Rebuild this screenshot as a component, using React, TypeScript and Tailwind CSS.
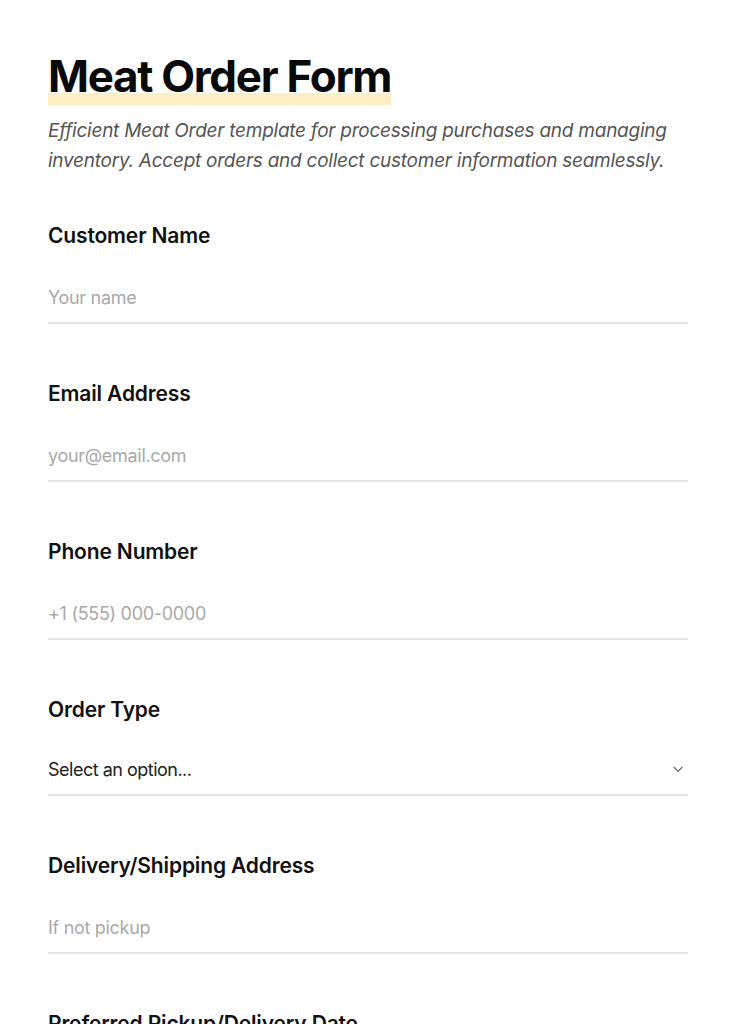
import React from 'react';

const fields = [
  { label: 'Customer Name', placeholder: 'Your name' },
  { label: 'Email Address', placeholder: 'your@email.com' },
  { label: 'Phone Number', placeholder: '+1 (555) 000-0000' },
];

const Label = ({ children }: { children: React.ReactNode }) => (
  <label className="block text-[21px] leading-[28px] font-semibold text-[#111] tracking-[-0.15px]">{children}</label>
);

const TextField = ({ label, placeholder }: { label: string; placeholder: string }) => (
  <div className="mb-[56px]">
    <Label>{label}</Label>
    <input
      type="text"
      placeholder={placeholder}
      className="mt-[26px] block w-full h-[48px] pb-[4px] border-b-2 border-[#e6e6e6] bg-transparent text-[18px] text-[#222] outline-none placeholder:text-[#a9a9a9] tracking-[-0.3px]"
    />
  </div>
);

const App = () => {
  return (
    <div className="min-h-screen bg-white px-12 pt-[50px] font-['Inter',sans-serif]">
      <h1 className="relative inline-block text-[44px] leading-[52px] font-bold text-[#0a0a0a] tracking-[-1.3px]">
        <span className="absolute left-0 right-0 top-[43px] h-[12px] bg-[#fcefc4]" />
        <span className="relative">Meat Order Form</span>
      </h1>
      <p className="mt-[14px] text-[19px] leading-[30px] italic text-[#555] tracking-[-0.25px]">
        Efficient Meat Order template for processing purchases and managing inventory. Accept orders and collect customer information seamlessly.
      </p>

      <div className="mt-[46px]">
        {fields.map((f) => (
          <TextField key={f.label} label={f.label} placeholder={f.placeholder} />
        ))}

        <div className="mb-[56px]">
          <Label>Order Type</Label>
          <div className="mt-[24px] flex h-[48px] pb-[4px] items-center justify-between border-b-2 border-[#e6e6e6]">
            <span className="text-[18px] text-[#222] tracking-[-0.5px]">Select an option...</span>
            <svg width="14" height="14" viewBox="0 0 24 24" fill="none" stroke="#666" strokeWidth="2" strokeLinecap="round" strokeLinejoin="round" className="mr-[3px]">
              <path d="M5 9l7 7 7-7" />
            </svg>
          </div>
        </div>

        <TextField label="Delivery/Shipping Address" placeholder="If not pickup" />
        <TextField label="Preferred Pickup/Delivery Date" placeholder="" />
      </div>
    </div>
  );
};

export default App;
